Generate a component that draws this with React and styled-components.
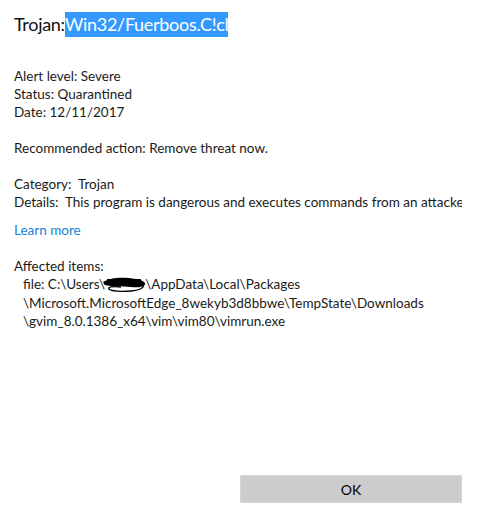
import React from "react";
import styled, { createGlobalStyle } from "styled-components";

const Global = createGlobalStyle`
  html, body { margin: 0; padding: 0; background: #ffffff; }
  body { font-family: Lato, "Noto Sans", sans-serif; color: #000; }
`;

const Page = styled.div`
  width: 485px;
  height: 510px;
  display: flex;
  flex-direction: column;
  box-sizing: border-box;
  overflow: hidden;
`;

const Content = styled.div`
  padding: 12px 23px 0 14px;
  font-size: 13.5px;
  line-height: 18px;
  overflow: hidden;
`;

const Title = styled.h1`
  margin: 0;
  font-size: 18px;
  font-weight: 400;
  letter-spacing: -0.3px;
  line-height: 25px;
  color: #111;
  display: flex;
`;

const Selected = styled.span`
  background: #3399ff;
  color: #ffffff;
`;

const Block = styled.div`
  margin-top: ${(p) => p.$gap || 0}px;
`;

const Line = styled.div`
  white-space: nowrap;
  overflow: hidden;
  padding-left: ${(p) => (p.$indent ? 9 : 0)}px;
  color: #1a1a1a;
`;

const Link = styled.a`
  display: block;
  color: #1683d8;
  text-decoration: none;
  margin-top: 10px;
  width: max-content;
  cursor: pointer;
`;

const Footer = styled.div`
  margin-top: auto;
  display: flex;
  justify-content: flex-end;
  padding: 0 23px 7px 0;
`;

const Button = styled.button`
  width: 222px;
  height: 28px;
  border: 1px solid #d6d6d6;
  background: #cccccc;
  font-family: inherit;
  font-size: 14px;
  color: #000;
  padding: 0;
`;

const ScribbleSvg = styled.svg`
  vertical-align: -5px;
  margin-left: -4px;
  margin-right: -2px;
`;

const Scribble = () => (
  <ScribbleSvg width="46" height="18" viewBox="0 0 46 18">
    <path
      d="M2 6 C8 2 18 1 28 2 C36 3 42 4 44 7 C45 10 40 12 30 11 C20 10 10 11 4 9 Z"
      fill="#000"
    />
    <path
      d="M3 8 C10 4 30 4 42 8 C44 11 40 14 30 15 C20 16 10 15 8 13 C6 11 12 10 20 11"
      fill="none"
      stroke="#000"
      strokeWidth="1.3"
    />
    <path d="M6 5 L40 5" stroke="#000" strokeWidth="4" />
  </ScribbleSvg>
);

export default function App() {
  return (
    <Page>
      <Global />
      <Content>
        <Title>
          <span>Trojan:</span>
          <Selected>Win32/Fuerboos.C!cl</Selected>
        </Title>
        <Block $gap={30}>
          <Line>Alert level: Severe</Line>
          <Line>Status: Quarantined</Line>
          <Line>Date: 12/11/2017</Line>
        </Block>
        <Block $gap={18}>
          <Line>Recommended action: Remove threat now.</Line>
        </Block>
        <Block $gap={18}>
          <Line>Category:&nbsp; Trojan</Line>
          <Line>Details:&nbsp; This program is dangerous and executes commands from an attacker.</Line>
        </Block>
        <Link>Learn more</Link>
        <Block $gap={18}>
          <Line>Affected items:</Line>
          <Line $indent>
            file: C:\Users\
            <Scribble />
            \AppData\Local\Packages
          </Line>
          <Line $indent>\Microsoft.MicrosoftEdge_8wekyb3d8bbwe\TempState\Downloads</Line>
          <Line $indent>\gvim_8.0.1386_x64\vim\vim80\vimrun.exe</Line>
        </Block>
      </Content>
      <Footer>
        <Button>OK</Button>
      </Footer>
    </Page>
  );
}
